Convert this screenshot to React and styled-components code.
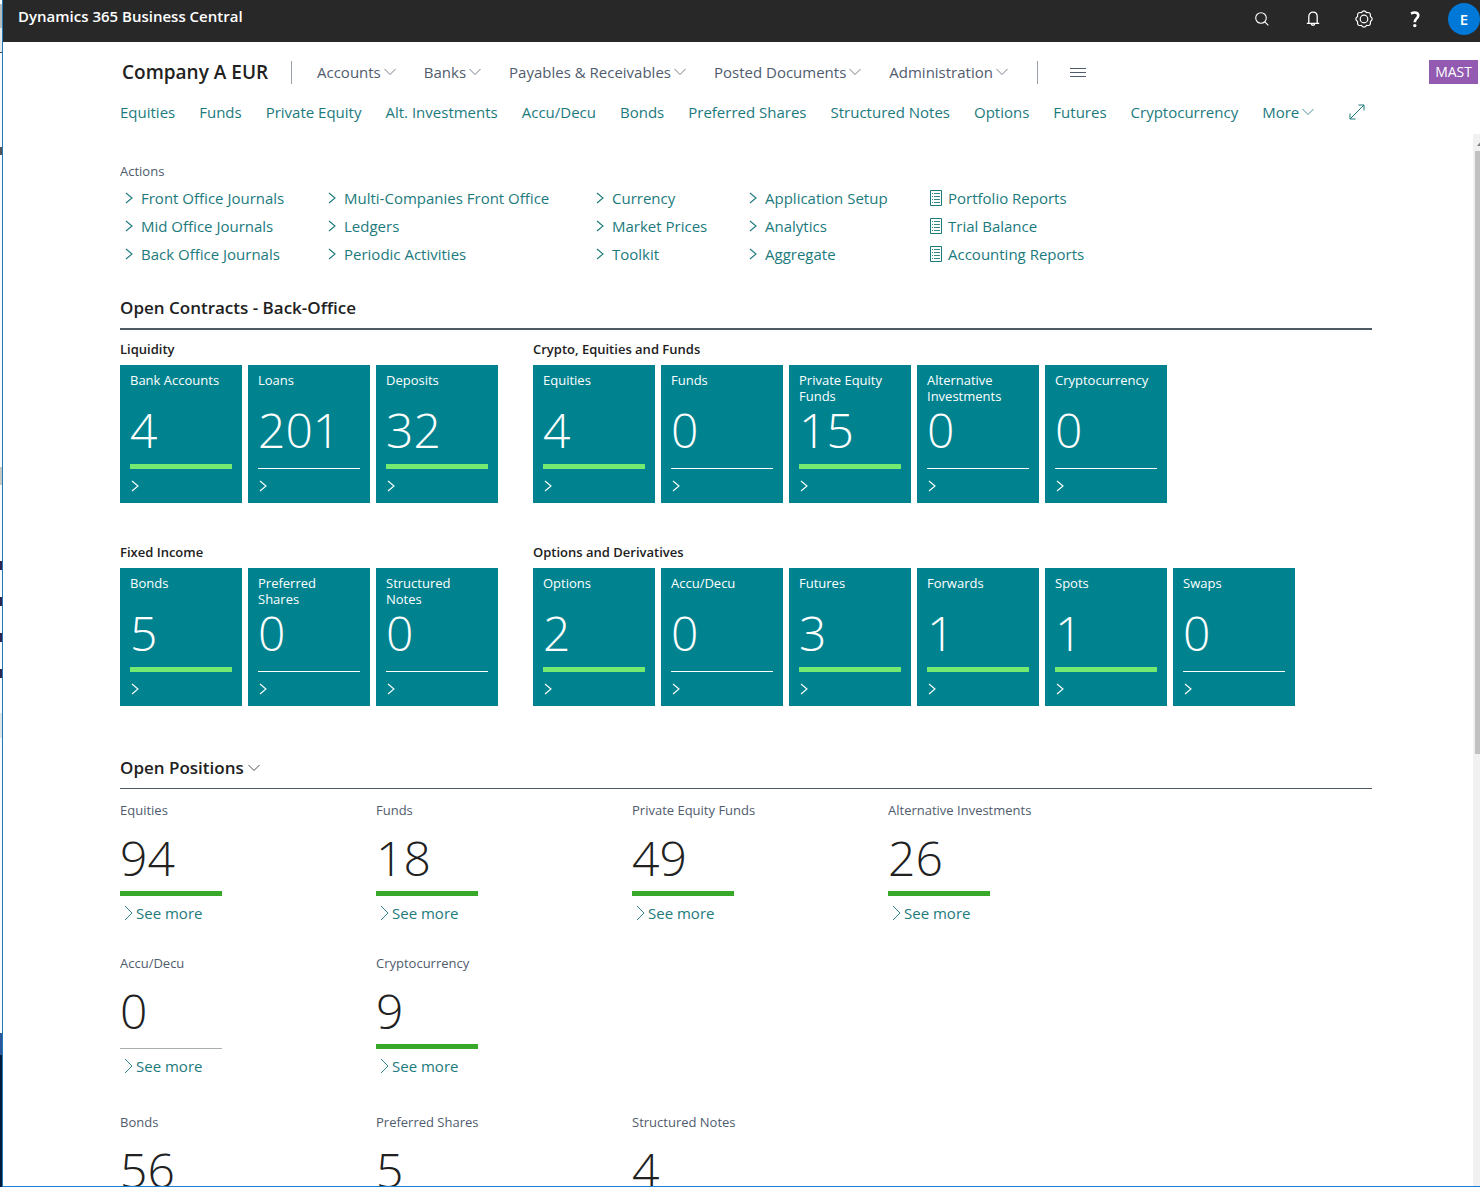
import React from "react";
import styled, { createGlobalStyle } from "styled-components";

const GlobalStyle = createGlobalStyle`
  * {
    box-sizing: border-box;
  }
  body {
    margin: 0;
    background-color: white;
    color: #212121;
    font-family: "Open Sans", "Noto Sans", sans-serif;
    font-size: 15px;
  }
  h1, h2, h3, p, ul, dl, dt, dd {
    margin: 0;
    padding: 0;
    font-weight: 400;
  }
  ul {
    list-style: none;
  }
  a {
    color: inherit;
    text-decoration: none;
  }
  button {
    padding: 0;
    border: 0;
    background: none;
    color: inherit;
    font: inherit;
    cursor: pointer;
  }
  svg {
    display: block;
    flex: none;
    fill: none;
    stroke: currentColor;
  }
`;

const Desktop = styled.div`
  display: flex;
  height: 100vh;
  overflow: hidden;
`;

const Strip = styled.div`
  flex: none;
  width: 2px;
  display: flex;
  flex-direction: column;
  background-color: #021a3c;
`;

const StripPart = styled.div`
  flex: none;
  height: ${(props) => props.$height}px;
  background-color: ${(props) => props.$color};
`;

const Window = styled.div`
  flex: 1;
  min-width: 0;
  display: flex;
  flex-direction: column;
  border-left: 1px solid #1f7bb8;
  border-bottom: 1px solid #1a7fd4;
`;

const TopBar = styled.header`
  flex: none;
  height: 42px;
  display: flex;
  justify-content: space-between;
  padding: 0 0 0 15px;
  background-color: #282828;
  color: white;
`;

const Product = styled.a`
  font-size: 15px;
  line-height: 32px;
  font-weight: 600;
`;

const Tools = styled.div`
  display: flex;
  align-items: center;
  height: 38px;
`;

const Tool = styled.button`
  width: 51px;
  height: 38px;
  display: flex;
  align-items: center;
  justify-content: center;
`;

const Avatar = styled.button`
  width: 32px;
  height: 32px;
  margin-left: 8px;
  border-radius: 50%;
  background-color: #0078d7;
  font-size: 15px;
  font-weight: 600;
`;

const NavArea = styled.div`
  flex: none;
  height: 92px;
  padding: 18px 2px 0 117px;
`;

const MenuRow = styled.nav`
  display: flex;
  align-items: center;
  height: 24px;
  color: #505c6d;
`;

const Company = styled.h1`
  width: 171px;
  padding-left: 2px;
  color: #212121;
  font-size: 19px;
  line-height: 24px;
  font-weight: 600;
  white-space: nowrap;
`;

const Divider = styled.span`
  width: 1px;
  height: 23px;
  background-color: #9aa0a8;
`;

const Menus = styled.ul`
  display: flex;
  gap: 28px;
  padding: 0 29px 0 25px;
`;

const MenuButton = styled.button`
  display: flex;
  align-items: center;
  gap: 3px;
  font-size: 15px;
  line-height: 24px;
  white-space: nowrap;
`;

const Burger = styled.button`
  margin-left: 32px;
`;

const Badge = styled.span`
  margin-left: auto;
  padding: 0 6px;
  background-color: #925ab1;
  color: white;
  font-size: 14px;
  line-height: 24px;
`;

const LinkRow = styled.nav`
  display: flex;
  align-items: center;
  gap: 24px;
  height: 24px;
  margin-top: 16px;
  color: #1c7a7d;
  line-height: 24px;
  white-space: nowrap;
`;

const Expand = styled.button`
  margin-left: 11px;
`;

const Body = styled.div`
  flex: 1;
  min-height: 0;
  display: flex;
`;

const Content = styled.main`
  flex: 1;
  min-width: 0;
  overflow: hidden;
  padding: 28px 101px 0 117px;
`;

const ScrollBar = styled.div`
  flex: none;
  width: 7px;
  padding-left: 2px;
  background-color: #f1f1f1;
  color: #808080;
  overflow: hidden;
`;

const ScrollArrow = styled.div`
  height: 17px;
  padding: 8px 0 0 2px;
`;

const Thumb = styled.div`
  height: 603px;
  background-color: #c1c1c1;
`;

const GroupLabel = styled.h3`
  color: #505c6d;
  font-size: 13px;
  line-height: 18px;
`;

const ActionGrid = styled.div`
  display: grid;
  grid-template-columns: 203px 268px 153px 183px auto;
  justify-content: start;
  margin-top: 4px;
  color: #1c7a7d;
`;

const ActionLink = styled.a`
  display: flex;
  align-items: center;
  font-size: 15px;
  line-height: 28px;
  white-space: nowrap;
`;

const ActionIcon = styled.span`
  width: 21px;
  padding-left: ${(props) => (props.$report ? 3 : 5)}px;
`;

const SectionTitle = styled.h2`
  display: flex;
  align-items: center;
  gap: 3px;
  padding-bottom: 8px;
  border-bottom: ${(props) => props.$rule}px solid #505a64;
  font-size: 17px;
  line-height: 24px;
  font-weight: 600;
`;

const Contracts = styled.section`
  margin-top: 28px;
`;

const TileRow = styled.div`
  display: flex;
  gap: 35px;
  margin-bottom: 30px;
`;

const TileGroup = styled.div`
  padding-top: 9px;
`;

const TileLabel = styled.h3`
  font-size: 13px;
  line-height: 20px;
  font-weight: 600;
`;

const Tiles = styled.div`
  display: flex;
  gap: 6px;
  margin-top: 6px;
`;

const Tile = styled.a`
  width: 122px;
  height: 138px;
  display: flex;
  flex-direction: column;
  padding: 7px 10px 11px;
  background-color: #00838f;
  color: white;
`;

const TileCaption = styled.span`
  height: 32px;
  font-size: 13px;
  line-height: 16px;
`;

const Figure = styled.span`
  display: block;
  margin-bottom: 8px;
  font-size: 48px;
  line-height: 52px;
  font-weight: 300;
`;

const Meter = styled.span`
  display: block;
  width: 102px;
  height: 5px;
  border-bottom: ${(props) => (props.$on ? 5 : 1)}px solid
    ${(props) => props.$color};
`;

const TileArrow = styled.span`
  margin-top: auto;
  padding-left: 1px;
`;

const Positions = styled.section`
  margin-top: 50px;
`;

const CueRow = styled.div`
  display: grid;
  grid-template-columns: repeat(4, 256px);
  margin-top: ${(props) => props.$gap}px;
`;

const Cue = styled.div`
  display: flex;
  flex-direction: column;
`;

const CueFigure = styled(Figure)`
  margin: 13px 0 7px;
`;

const SeeMore = styled.a`
  display: flex;
  align-items: center;
  gap: 3px;
  margin-top: 5px;
  padding-left: 4px;
  color: #1c7a7d;
  font-size: 15px;
  line-height: 24px;
`;

// slivers of the windows that lie behind, top to bottom
const stripParts = [
  [4, "white"],
  [24, "#b9bcbf"],
  [24, "#e6e8ea"],
  [1, "#454b55"],
  [94, "#fafafa"],
  [8, "#555555"],
  [312, "#fafafa"],
  [18, "#c9c9c4"],
  [76, "#fafafa"],
  [9, "#2f2350"],
  [27, "#fafafa"],
  [9, "#2f2350"],
  [27, "#fafafa"],
  [9, "#2f2350"],
  [27, "#fafafa"],
  [9, "#2f2350"],
  [35, "#fafafa"],
  [25, "#dfe2e6"],
  [295, "#fafafa"],
  [22, "#2b579a"],
];

const menus = [
  "Accounts",
  "Banks",
  "Payables & Receivables",
  "Posted Documents",
  "Administration",
];

const links = [
  "Equities",
  "Funds",
  "Private Equity",
  "Alt. Investments",
  "Accu/Decu",
  "Bonds",
  "Preferred Shares",
  "Structured Notes",
  "Options",
  "Futures",
  "Cryptocurrency",
];

const actions = [
  ["Front Office Journals", "Mid Office Journals", "Back Office Journals"],
  ["Multi-Companies Front Office", "Ledgers", "Periodic Activities"],
  ["Currency", "Market Prices", "Toolkit"],
  ["Application Setup", "Analytics", "Aggregate"],
  ["Portfolio Reports", "Trial Balance", "Accounting Reports"],
];

const contracts = [
  [
    {
      label: "Liquidity",
      tiles: [
        ["Bank Accounts", 4, true],
        ["Loans", 201, false],
        ["Deposits", 32, true],
      ],
    },
    {
      label: "Crypto, Equities and Funds",
      tiles: [
        ["Equities", 4, true],
        ["Funds", 0, false],
        ["Private Equity Funds", 15, true],
        ["Alternative Investments", 0, false],
        ["Cryptocurrency", 0, false],
      ],
    },
  ],
  [
    {
      label: "Fixed Income",
      tiles: [
        ["Bonds", 5, true],
        ["Preferred Shares", 0, false],
        ["Structured Notes", 0, false],
      ],
    },
    {
      label: "Options and Derivatives",
      tiles: [
        ["Options", 2, true],
        ["Accu/Decu", 0, false],
        ["Futures", 3, true],
        ["Forwards", 1, true],
        ["Spots", 1, true],
        ["Swaps", 0, false],
      ],
    },
  ],
];

const positions = [
  {
    gap: 12,
    cues: [
      ["Equities", 94],
      ["Funds", 18],
      ["Private Equity Funds", 49],
      ["Alternative Investments", 26],
    ],
  },
  {
    gap: 29,
    cues: [
      ["Accu/Decu", 0],
      ["Cryptocurrency", 9],
    ],
  },
  {
    gap: 35,
    cues: [
      ["Bonds", 56],
      ["Preferred Shares", 5],
      ["Structured Notes", 4],
    ],
  },
];

const ChevronDown = ({ width = 12 }) => (
  <svg width={width} height='8' viewBox='0 0 12 8'>
    <path d='M0.5 1L6 6.5L11.5 1' strokeWidth='0.8' />
  </svg>
);

const ChevronRight = ({ width = 8, height = 12, stroke = 1.1 }) => (
  <svg width={width} height={height} viewBox={`0 0 ${width} ${height}`}>
    <path
      d={`M1 1L${width - 1} ${height / 2}L1 ${height - 1}`}
      strokeWidth={stroke}
    />
  </svg>
);

const ReportIcon = () => (
  <svg width='12' height='16' viewBox='0 0 12 16'>
    <path d='M0.5 0.5H11.5V15.5H0.5Z' />
    <path
      d='M2 3.5H3M2 6.5H3M2 9.5H3M2 12.5H3M4 3.5H10M4 6.5H10M4 9.5H10M4 12.5H10'
      strokeWidth='0.9'
    />
  </svg>
);

const SearchIcon = () => (
  <svg width='14' height='14' viewBox='0 0 14 14'>
    <circle cx='6' cy='6' r='5.3' strokeWidth='1.1' />
    <path d='M9.8 9.8L13.4 13.4' strokeWidth='1.1' />
  </svg>
);

const BellIcon = () => (
  <svg width='14' height='16' viewBox='0 0 14 16'>
    <path
      d='M2.8 12.2V5.6C2.8 2.8 4.6 1.2 7 1.2S11.2 2.8 11.2 5.6V12.2M0.8 12.3H13.2M5.2 12.5C5.2 14.8 8.8 14.8 8.8 12.5'
      strokeWidth='1.3'
    />
  </svg>
);

const GearIcon = () => (
  <svg width='18' height='18' viewBox='0 0 18 18'>
    <path
      d='M15.4 6.4Q19 9 15.4 11.6Q16.1 16.1 11.6 15.4Q9 19 6.4 15.4Q1.9 16.1 2.6 11.6Q-1 9 2.6 6.4Q1.9 1.9 6.4 2.6Q9 -1 11.6 2.6Q16.1 1.9 15.4 6.4Z'
      strokeWidth='1.2'
      strokeLinejoin='round'
    />
    <circle cx='9' cy='9' r='3.8' strokeWidth='1.2' />
  </svg>
);

const HelpIcon = () => (
  <svg width='12' height='17' viewBox='0 0 12 17'>
    <path
      d='M2 2.6C5.6 0.6 9.6 1.6 9.2 4.8C8.9 7.4 5.8 7.6 5.8 11.2'
      strokeWidth='2.6'
    />
    <circle cx='5.8' cy='14.6' r='1.7' fill='currentColor' stroke='none' />
  </svg>
);

const BurgerIcon = () => (
  <svg width='16' height='11' viewBox='0 0 16 11'>
    <path d='M0 1.5H16M0 5.5H16M0 9.5H16' />
  </svg>
);

const ExpandIcon = () => (
  <svg width='16' height='16' viewBox='0 0 16 16'>
    <path d='M1 15L15 1M9.5 1H15V6.5M1 9.5V15H6.5' />
  </svg>
);

export default () => (
  <>
    <GlobalStyle />
    <Desktop>
      <Strip>
        {stripParts.map(([height, color], i) => (
          <StripPart key={i} $height={height} $color={color} />
        ))}
      </Strip>
      <Window>
        <TopBar>
          <Product href='#home'>Dynamics 365 Business Central</Product>
          <Tools>
            <Tool aria-label='Search'>
              <SearchIcon />
            </Tool>
            <Tool aria-label='Notifications'>
              <BellIcon />
            </Tool>
            <Tool aria-label='Settings'>
              <GearIcon />
            </Tool>
            <Tool aria-label='Help'>
              <HelpIcon />
            </Tool>
            <Avatar>E</Avatar>
          </Tools>
        </TopBar>
        <NavArea>
          <MenuRow>
            <Company>Company A EUR</Company>
            <Divider />
            <Menus>
              {menus.map((menu) => (
                <li key={menu}>
                  <MenuButton>
                    {menu}
                    <ChevronDown />
                  </MenuButton>
                </li>
              ))}
            </Menus>
            <Divider />
            <Burger aria-label='All menus'>
              <BurgerIcon />
            </Burger>
            <Badge>MAST</Badge>
          </MenuRow>
          <LinkRow>
            {links.map((link) => (
              <a key={link} href='#list'>
                {link}
              </a>
            ))}
            <MenuButton>
              More
              <ChevronDown />
            </MenuButton>
            <Expand aria-label='Expand'>
              <ExpandIcon />
            </Expand>
          </LinkRow>
        </NavArea>
        <Body>
          <Content>
            <GroupLabel>Actions</GroupLabel>
            <ActionGrid>
              {actions.map((column, i) => (
                <ul key={column[0]}>
                  {column.map((action) => (
                    <li key={action}>
                      <ActionLink href='#action'>
                        <ActionIcon $report={i === 4}>
                          {i === 4 ? <ReportIcon /> : <ChevronRight />}
                        </ActionIcon>
                        {action}
                      </ActionLink>
                    </li>
                  ))}
                </ul>
              ))}
            </ActionGrid>
            <Contracts>
              <SectionTitle $rule={2}>Open Contracts - Back-Office</SectionTitle>
              {contracts.map((row) => (
                <TileRow key={row[0].label}>
                  {row.map((group) => (
                    <TileGroup key={group.label}>
                      <TileLabel>{group.label}</TileLabel>
                      <Tiles>
                        {group.tiles.map(([name, count, on]) => (
                          <Tile key={name} href='#tile'>
                            <TileCaption>{name}</TileCaption>
                            <Figure>{count}</Figure>
                            <Meter $on={on} $color={on ? "#75ea70" : "white"} />
                            <TileArrow>
                              <ChevronRight />
                            </TileArrow>
                          </Tile>
                        ))}
                      </Tiles>
                    </TileGroup>
                  ))}
                </TileRow>
              ))}
            </Contracts>
            <Positions>
              <SectionTitle $rule={1}>
                Open Positions
                <ChevronDown width={14} />
              </SectionTitle>
              {positions.map((row) => (
                <CueRow key={row.gap} $gap={row.gap}>
                  {row.cues.map(([name, count]) => (
                    <Cue key={name}>
                      <GroupLabel>{name}</GroupLabel>
                      <CueFigure>{count}</CueFigure>
                      <Meter
                        $on={count > 0}
                        $color={count > 0 ? "#37a829" : "#a9aeb0"}
                      />
                      <SeeMore href='#more'>
                        <ChevronRight width={9} height={16} stroke={0.9} />
                        See more
                      </SeeMore>
                    </Cue>
                  ))}
                </CueRow>
              ))}
            </Positions>
          </Content>
          <ScrollBar>
            <ScrollArrow>
              <svg width='7' height='4' viewBox='0 0 7 4'>
                <path d='M0 4L3.5 0L7 4Z' fill='currentColor' stroke='none' />
              </svg>
            </ScrollArrow>
            <Thumb />
          </ScrollBar>
        </Body>
      </Window>
    </Desktop>
  </>
);
